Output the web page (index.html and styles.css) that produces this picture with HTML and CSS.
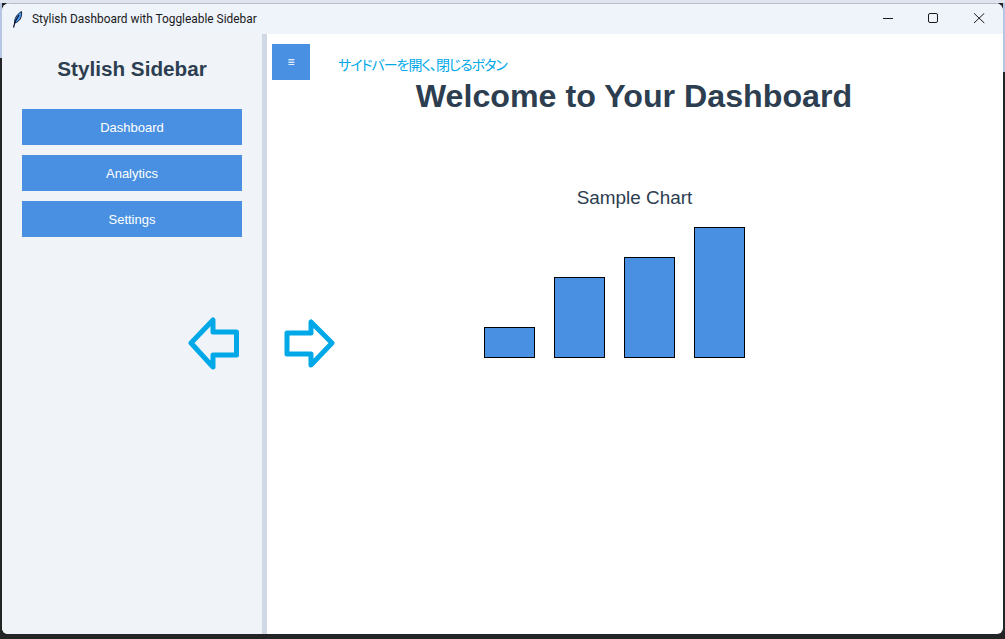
FILE: index.html
```html
<!DOCTYPE html>
<html lang="ja">
<head>
<meta charset="utf-8">
<title>Stylish Dashboard with Toggleable Sidebar</title>
<link rel="stylesheet" href="styles.css">
</head>
<body>
<div class="desktop">
  <div class="window">
    <header class="titlebar">
      <svg class="app-icon" width="11" height="17" viewBox="0 0 11 17"><path d="M2.500 12 C2.500 8 4 4 9.500 0.500 C10 4 9 8 6.500 10 L4.500 11.500 Z" fill="#4a9cf0" stroke="#12203c" stroke-width="1"/><path d="M1.500 16.500 L3 11 L7 4" fill="none" stroke="#0a1430" stroke-width="1.200"/></svg>
      <span class="app-title">Stylish Dashboard with Toggleable Sidebar</span>
      <div class="controls">
        <button class="ctl"><svg width="12" height="12" viewBox="0 0 12 12"><path d="M2 5.500H12" stroke="#1a1a1a" stroke-width="1"/></svg></button>
        <button class="ctl"><svg width="12" height="12" viewBox="0 0 12 12"><rect x="1.500" y="0.500" width="9" height="9" rx="1.500" fill="none" stroke="#1a1a1a" stroke-width="1"/></svg></button>
        <button class="ctl"><svg width="12" height="12" viewBox="0 0 12 12"><path d="M1 0.300L11.300 10M11.300 0.300L1 10" stroke="#1a1a1a" stroke-width="1"/></svg></button>
      </div>
    </header>
    <div class="body">
      <aside class="sidebar">
        <h2 class="side-title">Stylish Sidebar</h2>
        <nav class="side-nav">
          <a class="side-btn">Dashboard</a>
          <a class="side-btn">Analytics</a>
          <a class="side-btn">Settings</a>
        </nav>
      </aside>
      <main class="main">
        <div class="menu-btn">≡</div>
        <h1 class="welcome">Welcome to Your Dashboard</h1>
        <h3 class="chart-title">Sample Chart</h3>
        <div class="chart">
          <div class="bar" style="height:31px"></div>
          <div class="bar" style="height:81px"></div>
          <div class="bar" style="height:101px"></div>
          <div class="bar" style="height:131px"></div>
        </div>
      </main>
    </div>
    <div class="note">サイドバーを開く、閉じるボタン</div>
    <svg class="arrow arrow-left" width="52" height="54" viewBox="0 0 52 54"><path d="M3 26 L25 3 V15 H48.500 V38 H25 V50 Z" fill="none" stroke="#00a8e8" stroke-width="5" stroke-linejoin="round"/></svg>
    <svg class="arrow arrow-right" width="52" height="50" viewBox="0 0 52 50"><path d="M48 24 L27 3 V14 H3 V35 H27 V46 Z" fill="none" stroke="#00a8e8" stroke-width="5" stroke-linejoin="round"/></svg>
  </div>
</div>
</body>
</html>
```
FILE: styles.css
```css
* { box-sizing: border-box; }
html, body { margin: 0; padding: 0; }
body { width: 1005px; height: 639px; overflow: hidden; background: #232425; }
.desktop {
  width: 1005px; height: 639px; padding: 3px 2px 5px 2px;
  background:
    linear-gradient(#dfe5ee, #dfe5ee) 0 0 / 1005px 3px no-repeat,
    linear-gradient(#b4c6e2, #b4c6e2) 0 0 / 2px 58px no-repeat,
    linear-gradient(#b4c6e2, #b4c6e2) 1003px 0 / 2px 72px no-repeat,
    #232425;
}
.window {
  position: relative;
  width: 1001px; height: 631px;
  display: flex; flex-direction: column;
  background: #fff;
  border-radius: 8px 8px 6px 6px;
  overflow: hidden;
}
.titlebar {
  height: 31px; flex: none;
  display: flex; align-items: center;
  background: #eff3fa;
  border-top: 1px solid #b8bcc4;
  padding-left: 10px;
}
.app-icon { flex: none; margin-top: 1px; }
.app-title {
  margin-left: 9px;
  font: 11.900px Roboto, "Noto Sans", sans-serif;
  color: #1a1a1a;
}
.controls { margin-left: auto; display: flex; padding-right: 1px; }
.ctl {
  width: 46px; height: 30px; border: 0; padding: 0;
  background: none; display: flex; align-items: center; justify-content: center;
}
.body { flex: 1; display: flex; min-height: 0; }
.sidebar {
  width: 265px; flex: none;
  background: #f0f4f8;
  border-right: 5px solid #d0d8e4;
  padding: 20px 20px 0;
}
.side-title {
  margin: 0; height: 30px;
  text-align: center;
  font: bold 20.700px/30px "Liberation Sans", Arial, sans-serif;
  color: #2c3e50;
}
.side-nav { margin-top: 25px; display: flex; flex-direction: column; gap: 10px; }
.side-btn {
  height: 36px; display: flex; align-items: center; justify-content: center;
  background: #4a90e2; color: #fff;
  font: 13px "Liberation Sans", Arial, sans-serif;
}
.main { flex: 1; padding: 10px 0 0 5px; min-width: 0; }
.menu-btn {
  width: 38px; height: 36px;
  display: flex; align-items: center; justify-content: center;
  background: #4a90e2; color: #fff;
  font: 12px "Liberation Sans", Arial, sans-serif;
}
.welcome {
  margin: -4px 0 0; text-align: center;
  font: bold 32.200px/40px "Liberation Sans", Arial, sans-serif;
  color: #2c3e50;
  padding-right: 7px;
}
.chart-title {
  margin: 70px 0 0; text-align: center;
  font: normal 18.900px/24px "Liberation Sans", Arial, sans-serif;
  color: #2c3e50;
  padding-right: 6px;
}
.chart {
  margin: 17px 0 0 212px;
  display: flex; align-items: flex-end; gap: 19px;
  height: 131px;
}
.bar { width: 51px; background: #4a90e2; border: 1px solid #000; }
.note {
  position: absolute; left: 336px; top: 51px;
  font: 14px/20px "Noto Sans CJK JP", sans-serif;
  font-feature-settings: "palt";
  color: #00a8e8;
  letter-spacing: -1.030px;
}
.arrow { position: absolute; }
.arrow-left { left: 186px; top: 314px; }
.arrow-right { left: 282px; top: 316px; }
```
